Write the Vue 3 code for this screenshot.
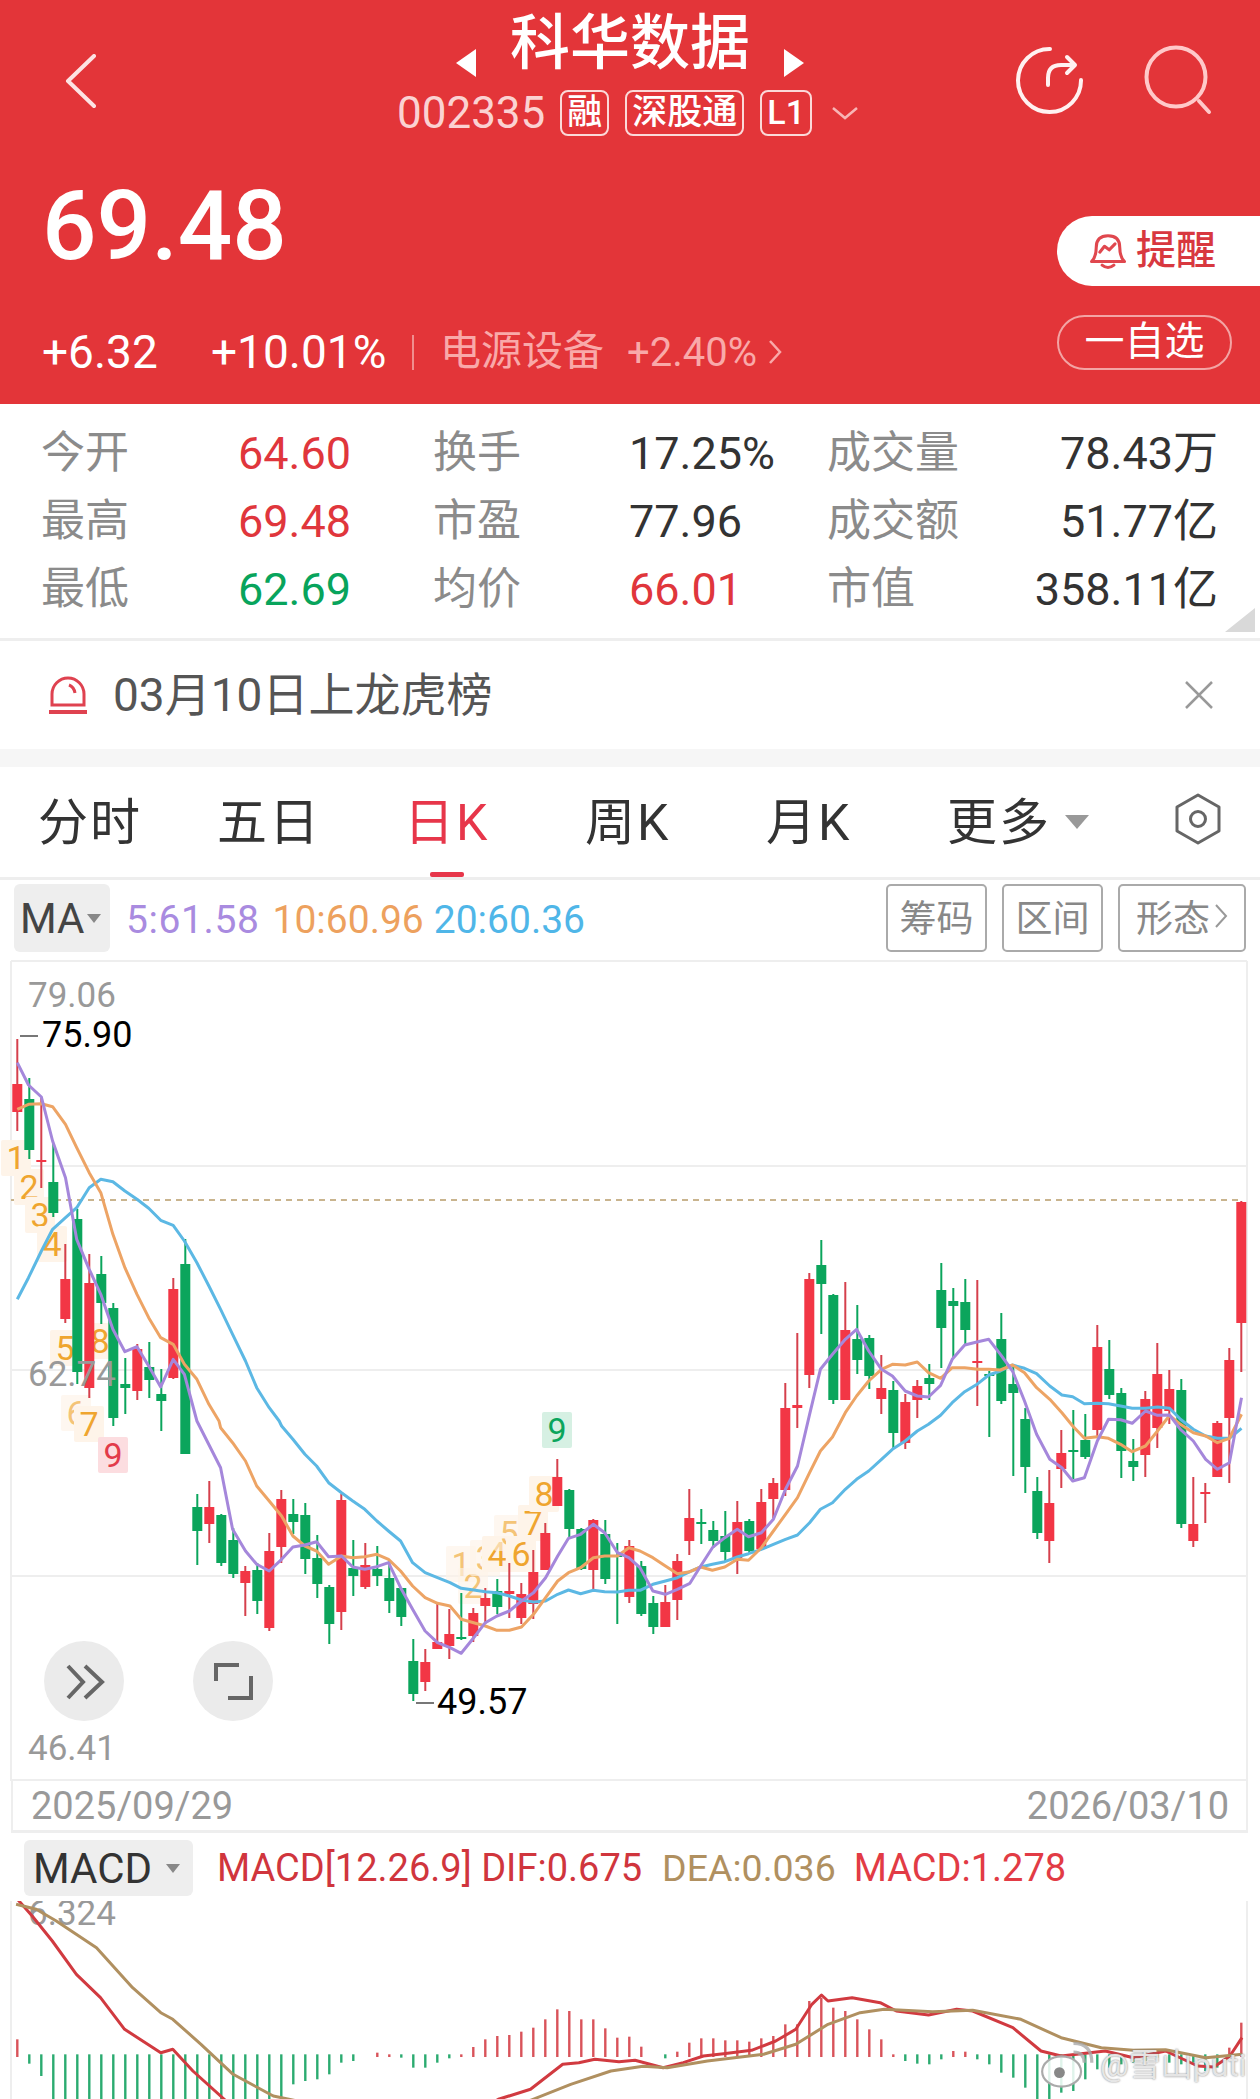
<script setup>
const z3 = (x, y) => [x / 2.489, 960 + y / 3]
const z5 = (x, y) => [x / 2.489, 1400 + y / 3]
const z4 = (x, y) => [630 + x / 2.489, 1150 + y / 3]
const z6 = (x, y) => [x / 1.244, 1780 + y / 3]
const seg = (fn, a) => {
  const out = []
  for (let i = 0; i < a.length; i += 2) out.push(fn(a[i], a[i + 1]).map((v) => v.toFixed(1)).join(','))
  return out
}
const line = (...parts) => parts.flat().join(' ')

const ma5 = line(
  seg(z3, [43,305,71,372,103,408,131,540,163,650,191,835,222,925,251,1000,281,1105,311,1172,341,1157,370,1215,400,1278,431,1195,459,1240,490,1380]),
  seg(z5, [549,200,579,385,611,450,639,490,670,510,701,475,729,438,759,432,788,422,818,467,850,465,878,498,908,505,938,497,967,485,997,560,1027,625,1058,690,1089,725,1120,740,1148,757,1179,710,1208,665,1237,645,1268,630,1298,600,1328,575,1358,530,1388,465,1415,412,1445,400,1477,370,1505,395,1537,455,1565,470]),
  seg(z4, [25,1250,57,1320,88,1330,118,1315,149,1297,176,1245,205,1190,236,1160,267,1135,295,1157,327,1145,357,1105,387,1015,417,945,447,790,474,655,504,610,536,565,564,535,594,600,626,655,653,675,685,720,715,735,743,738,773,703,802,625,833,582,866,572,893,565,922,610,952,660,982,750,1012,850,1045,925,1075,950,1102,990,1131,980,1163,870,1191,805,1221,806,1250,817,1283,780,1313,793,1343,792,1370,835,1402,870,1433,925,1462,955,1492,935,1522,740])
)
const ma10 = line(
  seg(z3, [43,445,71,430,103,428,131,437,163,490,191,560,222,635,251,695,281,820,311,920,341,1000,370,1070,400,1130,431,1150,459,1210,490,1255,520,1330,545,1380]),
  seg(z5, [549,80,579,125,611,180,639,255,670,300,701,345,729,405,759,435,788,450,818,490,850,465,878,470,908,467,938,460,967,475,997,510,1027,555,1058,590,1089,607,1120,615,1148,655,1179,665,1208,675,1237,688,1268,688,1298,678,1328,640,1358,590,1388,540,1415,515,1445,500,1477,470,1505,465,1537,465,1565,440]),
  seg(z4, [25,1200,57,1220,88,1245,118,1268,149,1262,176,1248,205,1258,236,1248,267,1225,295,1228,327,1190,357,1140,387,1090,417,1040,447,965,474,900,504,858,536,785,564,735,594,690,626,655,653,640,685,642,715,633,743,665,773,682,802,650,833,650,866,655,893,655,922,657,952,642,982,665,1012,710,1045,745,1075,785,1102,825,1131,862,1163,857,1191,862,1221,880,1250,902,1283,885,1313,840,1343,793,1370,820,1402,845,1433,855,1462,875,1492,862,1522,790])
)
const ma20 = line(
  seg(z3, [43,1015,71,950,103,870,131,805,163,770,191,740,222,680,251,655,281,662,311,690,341,715,370,742,400,778,431,793,459,840,490,905,520,975,549,1045,579,1120,611,1200,639,1280,670,1340,695,1380]),
  seg(z5, [701,75,729,115,759,160,788,195,818,245,850,275,878,300,908,325,938,360,967,390,997,420,1027,485,1058,515,1089,530,1120,545,1148,562,1179,567,1208,572,1237,575,1268,585,1298,597,1328,603,1358,600,1388,580,1415,567,1445,578,1477,568,1505,572,1537,573,1565,568]),
  seg(z4, [25,1318,57,1300,88,1290,118,1280,149,1262,176,1248,205,1240,236,1232,267,1218,295,1208,327,1195,357,1180,387,1165,417,1152,447,1115,474,1075,504,1055,536,1015,564,985,594,960,626,925,653,895,685,870,715,840,743,820,773,793,802,755,833,722,866,698,893,672,922,660,952,642,982,652,1012,668,1045,705,1075,732,1102,737,1131,758,1163,757,1191,758,1221,765,1250,772,1283,772,1313,768,1343,772,1370,805,1402,835,1433,855,1462,862,1492,862,1522,832])
)

// high, body top, body bottom, low, colour (r / g)
const raw = [
  [1038,1083,1111,1130,'r'],[1077,1098,1149,1158,'g'],[1097,1159,1161,1187,'r'],[1143,1181,1212,1216,'g'],[1243,1278,1318,1322,'r'],
  [1208,1218,1371,1383,'g'],[1253,1282,1387,1397,'r'],[1255,1273,1302,1323,'g'],[1302,1307,1417,1425,'g'],[1357,1383,1387,1413,'g'],
  [1343,1348,1390,1399,'r'],[1341,1366,1379,1397,'g'],[1368,1393,1400,1430,'g'],[1277,1288,1377,1378,'r'],[1238,1263,1453,1453,'g'],
  [1493,1506,1530,1564,'g'],[1480,1506,1523,1542,'r'],[1513,1514,1562,1565,'g'],[1527,1539,1573,1577,'g'],[1565,1570,1582,1615,'r'],
  [1562,1569,1600,1613,'g'],[1532,1550,1627,1630,'r'],[1489,1498,1546,1562,'r'],[1498,1513,1521,1533,'g'],[1502,1514,1558,1573,'g'],
  [1534,1557,1583,1597,'g'],[1584,1586,1623,1643,'g'],[1493,1499,1611,1629,'r'],[1539,1567,1575,1595,'g'],[1542,1564,1586,1588,'r'],
  [1545,1568,1575,1585,'g'],[1560,1577,1600,1612,'g'],[1587,1587,1616,1625,'g'],[1638,1660,1693,1700,'g'],[1648,1661,1681,1690,'r'],
  [1602,1641,1648,1648,'r'],[1608,1633,1645,1658,'r'],[1592,1636,1638,1639,'g'],[1607,1612,1635,1641,'r'],[1587,1597,1605,1623,'r'],
  [1578,1590,1606,1613,'g'],[1562,1590,1593,1617,'r'],[1582,1593,1617,1623,'r'],[1549,1571,1603,1618,'r'],[1522,1532,1569,1569,'r'],
  [1458,1476,1505,1505,'r'],[1488,1489,1528,1538,'g'],[1527,1528,1568,1569,'g'],[1518,1519,1569,1588,'r'],[1519,1533,1578,1583,'g'],
  [1542,1554,1556,1623,'g'],[1539,1545,1596,1602,'r'],[1560,1565,1613,1615,'g'],[1595,1602,1626,1633,'g'],[1584,1601,1626,1626,'r'],
  [1553,1560,1599,1619,'r'],[1488,1517,1540,1554,'r'],[1508,1521,1523,1543,'g'],[1520,1529,1540,1547,'g'],[1510,1535,1551,1560,'g'],
  [1500,1521,1557,1573,'r'],[1518,1520,1550,1552,'g'],[1488,1501,1548,1549,'r'],[1477,1482,1498,1517,'r'],[1382,1407,1489,1495,'r'],
  [1332,1404,1407,1427,'r'],[1272,1278,1374,1387,'r'],[1239,1264,1283,1333,'g'],[1293,1294,1399,1403,'g'],[1281,1329,1399,1399,'r'],
  [1304,1338,1359,1373,'g'],[1334,1337,1375,1388,'g'],[1354,1387,1398,1413,'r'],[1380,1389,1432,1447,'g'],[1393,1401,1442,1448,'r'],
  [1379,1385,1399,1417,'r'],[1363,1377,1383,1399,'g'],[1262,1289,1327,1367,'g'],[1287,1300,1305,1357,'g'],[1278,1301,1329,1343,'g'],
  [1279,1360,1362,1405,'r'],[1370,1373,1375,1436,'g'],[1312,1338,1400,1403,'g'],[1363,1383,1392,1475,'g'],[1407,1418,1466,1492,'g'],
  [1476,1490,1532,1538,'g'],[1469,1502,1540,1562,'r'],[1429,1452,1468,1487,'r'],[1409,1449,1451,1478,'g'],[1413,1439,1456,1458,'g'],
  [1324,1346,1429,1435,'r'],[1339,1368,1394,1398,'g'],[1387,1392,1450,1477,'g'],[1438,1460,1466,1480,'g'],[1390,1398,1454,1476,'r'],
  [1342,1373,1427,1447,'r'],[1369,1388,1410,1423,'r'],[1378,1389,1523,1527,'g'],[1476,1523,1540,1546,'r'],[1482,1491,1493,1522,'r'],
  [1420,1422,1476,1476,'r'],[1347,1359,1417,1482,'r'],[1200,1201,1322,1371,'r']
]
const candles = raw.map(([hi, top, bot, lo, c], i) => ({ x: 17.3 + 12 * i, hi, top, bot, lo, c }))

const tags = [
  { d: '1', x: 16, y: 1157, k: 'o' }, { d: '2', x: 29, y: 1186, k: 'o' }, { d: '3', x: 40, y: 1214, k: 'o' },
  { d: '4', x: 52, y: 1243, k: 'o' }, { d: '5', x: 65, y: 1347, k: 'o' }, { d: '8', x: 100, y: 1340, k: 'o' },
  { d: '6', x: 76, y: 1412, k: 'f' }, { d: '7', x: 89, y: 1423, k: 'o' }, { d: '9', x: 113, y: 1454, k: 'r' },
  { d: '1', x: 461, y: 1563, k: 'f' }, { d: '2', x: 473, y: 1585, k: 'f' }, { d: '3', x: 485, y: 1557, k: 'f' },
  { d: '4', x: 497, y: 1553, k: 'o' }, { d: '5', x: 509, y: 1532, k: 'f' }, { d: '6', x: 521, y: 1553, k: 'o' },
  { d: '7', x: 533, y: 1522, k: 'o' }, { d: '8', x: 544, y: 1493, k: 'o' }, { d: '9', x: 557, y: 1429, k: 'g' }
]

const macdEnds = [
  775,848,885,960,960,960,960,960,960,960,960,960,960,960,960,960,960,960,960,960,960,960,960,910,900,895,880,845,840,null,
  815,820,830,860,860,845,832,820,798,775,765,762,752,740,715,685,690,715,715,742,770,767,797,null,832,812,785,772,772,778,
  778,782,772,765,730,730,660,650,680,690,715,745,775,820,840,848,850,835,810,812,835,850,875,890,920,960,960,935,930,895,
  865,860,850,845,840,830,845,850,845,870,860,800,725
]
const bars = macdEnds.map((e, i) => e === null ? null : {
  x: 17.3 + 12 * i,
  y1: e < 824 ? 1780 + 828 / 3 : 1780 + 820 / 3,
  y2: 1780 + e / 3,
  c: e < 824 ? 'r' : 'g'
}).filter(Boolean)

const dif = line(seg(z6, [20,350,40,405,65,480,95,580,125,650,155,745,200,815,215,805,240,870,280,957,320,1040]), seg(z6, [580,1010,620,955,660,925,700,850,720,845,740,835,770,842,790,838,825,860,850,845,875,825,900,818,935,808,965,780,990,745,1010,670,1022,642,1030,660,1060,650,1095,665,1115,690,1155,702,1190,685,1210,690,1260,740,1295,810,1320,825,1375,810,1410,830,1450,810,1490,855,1510,858,1530,825,1545,770]))
const dea = line(seg(z6, [20,370,45,385,70,420,120,500,165,620,200,695,215,715,250,790,290,880,340,945,370,960,420,985]), seg(z6, [610,990,660,958,710,910,760,870,800,856,830,860,880,840,950,820,990,790,1030,730,1070,695,1100,685,1160,692,1210,688,1270,715,1320,770,1370,800,1410,808,1450,806,1500,830,1545,820]))

const stats = [
  { a: '今开', b: '64.60', bc: 'red', c: '换手', d: '17.25%', dc: 'dark', e: '成交量', f: '78.43万' },
  { a: '最高', b: '69.48', bc: 'red', c: '市盈', d: '77.96', dc: 'dark', e: '成交额', f: '51.77亿' },
  { a: '最低', b: '62.69', bc: 'green', c: '均价', d: '66.01', dc: 'red', e: '市值', f: '358.11亿' }
]
const tabs = ['分时', '五日', '日K', '周K', '月K']
</script>

<template>
  <div class="page">
    <header class="header">
      <div class="topbar">
        <svg class="back" width="32" height="56" viewBox="0 0 32 56"><polyline points="29,2 3,27 29,52" /></svg>
        <div class="center">
          <div class="title-row">
            <span class="tri tri-l"></span>
            <span class="title">科华数据</span>
            <span class="tri tri-r"></span>
          </div>
          <div class="sub-row">
            <span class="code">002335</span>
            <span class="tag">融</span>
            <span class="tag">深股通</span>
            <span class="tag tag-l">L1</span>
            <svg class="down" width="28" height="14" viewBox="0 0 28 14"><polyline points="2,2 14,12 26,2" /></svg>
          </div>
        </div>
        <div class="icons">
          <svg class="ic" width="70" height="70" viewBox="0 0 70 70">
            <path class="ic-w" d="M35 4 A31.5 31.5 0 1 0 66 35" />
            <path class="ic-w" d="M33 40 V33 Q33 20 46 20 H59 M52 12 L60 20 L52 28" />
          </svg>
          <svg class="ic" width="70" height="72" viewBox="0 0 70 72">
            <circle class="ic-p" cx="32" cy="32" r="29.5" />
            <path class="ic-p" d="M55 56 L65 67" />
          </svg>
        </div>
      </div>
      <div class="quote">
        <div class="quote-left">
          <div class="price">69.48</div>
          <div class="delta-row">
            <span class="delta">+6.32</span>
            <span class="delta delta-pct">+10.01%</span>
            <span class="divider"></span>
            <span class="sector">电源设备</span>
            <span class="sector-pct">+2.40%</span>
            <svg width="14" height="28" viewBox="0 0 14 28" class="sector-arrow"><polyline points="2,3 12,14 2,25" /></svg>
          </div>
        </div>
        <div class="quote-right">
          <div class="remind">
            <svg width="40" height="40" viewBox="0 0 34 34" class="bell">
              <path d="M3 26 Q7 22 7 14 Q7 4 17 4 Q27 4 27 14 Q27 22 31 26 Z" />
              <path d="M12 29 Q17 33 22 29" />
              <path d="M10 18 L14 13 L18 16 L23 11" />
            </svg>
            <span class="remind-text">提醒</span>
          </div>
          <div class="watch">一自选</div>
        </div>
      </div>
    </header>

    <section class="stats">
      <template v-for="r in stats" :key="r.a">
        <span class="lbl">{{ r.a }}</span>
        <span class="val" :class="r.bc">{{ r.b }}</span>
        <span class="lbl">{{ r.c }}</span>
        <span class="val" :class="r.dc">{{ r.d }}</span>
        <span class="lbl">{{ r.e }}</span>
        <span class="val dark end">{{ r.f }}</span>
      </template>
      <span class="corner"></span>
    </section>

    <section class="notice">
      <svg width="42" height="40" viewBox="0 0 42 40" class="notice-ic">
        <path d="M5 30 V19 A16 16 0 0 1 37 19 V30 Z" />
        <path d="M22 10 Q27 12 28 18" />
        <path class="base" d="M2 37 H40" />
      </svg>
      <span class="notice-text">03月10日上龙虎榜</span>
      <svg width="30" height="30" viewBox="0 0 30 30" class="close"><path d="M2 2 L28 28 M28 2 L2 28" /></svg>
    </section>

    <div class="band"></div>

    <nav class="tabs">
      <span v-for="t in tabs" :key="t" class="tab" :class="{ on: t === '日K' }">{{ t }}</span>
      <span class="tab more">更多<i class="more-tri"></i></span>
      <svg width="48" height="54" viewBox="0 0 48 54" class="hex">
        <path d="M24 3 L45 15 V39 L24 51 L3 39 V15 Z" />
        <circle cx="24" cy="27" r="7.5" />
      </svg>
    </nav>

    <div class="ma-row">
      <div class="ma-box">MA<i class="small-tri"></i></div>
      <div class="ma-vals">
        <span class="m5">5:61.58</span>
        <span class="m10">10:60.96</span>
        <span class="m20">20:60.36</span>
      </div>
      <div class="ma-btns">
        <span class="mbtn">筹码</span>
        <span class="mbtn">区间</span>
        <span class="mbtn wide">形态<svg width="14" height="26" viewBox="0 0 14 26"><polyline points="2,2 12,13 2,24" /></svg></span>
      </div>
    </div>

    <svg class="kline" width="1260" height="822" viewBox="0 958 1260 822">
      <line v-for="y in [960, 1165, 1369, 1575, 1779]" :key="y" class="grid" x1="11" x2="1247" :y1="y" :y2="y" />
      <line class="grid" x1="11" x2="11" y1="960" y2="1780" />
      <line class="grid" x1="1247" x2="1247" y1="960" y2="1780" />
      <line class="dash" x1="11" x2="1240" y1="1199" y2="1199" />

      <g v-for="(t, i) in tags" :key="i" :class="'td-' + t.k">
        <rect :x="t.x - 15" :y="t.y - 18" width="30" height="36" rx="2" />
        <text :x="t.x" :y="t.y + 12">{{ t.d }}</text>
      </g>

      <g v-for="(c, i) in candles" :key="i" :class="c.c === 'r' ? 'up' : 'dn'">
        <line class="wick" :x1="c.x" :x2="c.x" :y1="c.hi" :y2="c.lo" />
        <rect class="body" :x="c.x - 5" :y="c.top" width="10" :height="Math.max(c.bot - c.top, 2)" />
      </g>

      <polyline class="ln l20" :points="ma20" />
      <polyline class="ln l10" :points="ma10" />
      <polyline class="ln l5" :points="ma5" />

      <text class="axis" x="28" y="1006">79.06</text>
      <text class="axis" x="28" y="1385">62.74</text>
      <text class="axis" x="28" y="1759">46.41</text>
      <line class="mark" x1="20" x2="38" y1="1035" y2="1035" />
      <text class="peak" x="42" y="1046">75.90</text>
      <line class="mark" x1="416" x2="434" y1="1702" y2="1702" />
      <text class="peak" x="437" y="1713">49.57</text>

      <circle class="round" cx="84" cy="1680" r="40" />
      <circle class="round" cx="233" cy="1680" r="40" />
      <path class="round-ic" d="M68 1665 L83 1681 L68 1697 M85 1665 L102 1681 L85 1697" />
      <path class="round-ic" d="M216 1680 V1664 H239 M251 1675 V1697 H228" />
    </svg>

    <div class="dates">
      <span>2025/09/29</span>
      <span>2026/03/10</span>
    </div>

    <div class="macd-head">
      <div class="macd-box">MACD<i class="small-tri"></i></div>
      <span class="mh-a">MACD[12.26.9] DIF:0.675</span>
      <span class="mh-b">DEA:0.036</span>
      <span class="mh-c">MACD:1.278</span>
    </div>

    <div class="macd-wrap">
      <svg class="macd" width="1260" height="199" viewBox="0 1900 1260 199">
        <line class="grid" x1="11" x2="11" y1="1900" y2="2099" />
        <line class="grid" x1="1247" x2="1247" y1="1900" y2="2099" />
        <text class="axis" x="28" y="1924">6.324</text>
        <line v-for="(b, i) in bars" :key="i" :class="b.c === 'r' ? 'bar-r' : 'bar-g'" :x1="b.x" :x2="b.x" :y1="b.y1" :y2="b.y2" />
        <polyline class="ln dif" :points="dif" />
        <polyline class="ln dea" :points="dea" />
      </svg>
      <div class="wm">
        <svg width="54" height="50" viewBox="0 0 50 46">
          <ellipse class="wm-s" cx="20" cy="29" rx="18" ry="14" />
          <circle class="wm-e" cx="18" cy="30" r="5" />
          <path class="wm-a" d="M31 11 Q41 11 41 21 M31 3 Q48 3 48 21" />
        </svg>
        <span class="wm-text">@雪山puti</span>
      </div>
    </div>
  </div>
</template>

<style>
html, body { margin: 0; background: #fff; }
</style>

<style scoped>
.page {
  width: 1260px;
  height: 2099px;
  overflow: hidden;
  background: #fff;
  font-family: Roboto, "Noto Sans CJK SC", sans-serif;
}
i { display: block; font-style: normal; }

.header {
  height: 404px;
  background: #e33539;
  color: #fff;
  box-sizing: border-box;
}
.topbar {
  height: 148px;
  display: grid;
  grid-template-columns: 1fr auto 1fr;
}
.back { margin: 54px 0 0 65px; }
.back polyline { fill: none; stroke: #fde3e3; stroke-width: 4; stroke-linecap: round; stroke-linejoin: round; }
.center { padding-top: 6px; display: flex; flex-direction: column; align-items: center; }
.title-row { height: 84px; display: flex; align-items: flex-start; gap: 34px; }
.title { font-size: 60px; line-height: 76px; font-weight: 500; }
.tri { width: 0; height: 0; margin-top: 43px; border-top: 14px solid transparent; border-bottom: 14px solid transparent; }
.tri-l { border-right: 20px solid #fff; }
.tri-r { border-left: 20px solid #fff; }
.sub-row { display: flex; align-items: center; height: 46px; gap: 16px; padding-right: 4px; }
.code { font-size: 44px; line-height: 46px; color: #fbd2d2; margin-right: -1px; }
.tag {
  height: 46px;
  box-sizing: border-box;
  border: 2px solid #fbd9d9;
  border-radius: 8px;
  padding: 0 5px;
  font-size: 35px;
  line-height: 41px;
  font-weight: 500;
  color: #fff;
}
.tag-l { padding: 0 5px; font-size: 34px; }
.down { margin-left: 3px; }
.down polyline { fill: none; stroke: #f8b5b5; stroke-width: 2.5; }
.icons { display: flex; justify-content: flex-end; gap: 59px; padding: 45px 46px 0 0; align-items: flex-start; }
.ic-w, .ic-p { fill: none; stroke-width: 4; stroke-linecap: round; stroke-linejoin: round; }
.ic-w { stroke: #fff1f1; }
.ic-p { stroke: #ffc9c9; }

.quote { display: flex; justify-content: space-between; height: 256px; }
.quote-left { padding: 28px 0 0 42px; }
.price { font-size: 96px; line-height: 100px; font-weight: 500; }
.delta-row { margin-top: 51px; display: flex; align-items: center; height: 50px; }
.delta { font-size: 46px; width: 169px; }
.delta-pct { width: 201px; }
.divider { width: 2px; height: 35px; background: #f08f8f; margin-right: 26px; }
.sector { font-size: 41px; line-height: 46px; padding-bottom: 2px; color: #f9a9a9; width: 187px; }
.sector-pct { font-size: 40px; color: #f9a9a9; width: 141px; }
.sector-arrow polyline { fill: none; stroke: #f9a9a9; stroke-width: 2.5; }
.quote-right { width: 203px; padding-top: 68px; }
.remind {
  height: 70px;
  background: #fff;
  border-radius: 35px 0 0 35px;
  display: flex;
  align-items: center;
  padding-left: 31px;
  gap: 8px;
  font-size: 40px;
  font-weight: 500;
  color: #d8383f;
}
.remind-text { line-height: 46px; }
.bell { flex: none; }
.bell path { fill: none; stroke: #e0474e; stroke-width: 2.6; stroke-linejoin: round; stroke-linecap: round; }
.watch {
  margin-top: 29px;
  width: 175px;
  height: 55px;
  box-sizing: border-box;
  border: 2px solid #f3a4a4;
  border-radius: 28px;
  font-size: 40px;
  line-height: 49px;
  text-align: center;
  color: #fff;
}

.stats {
  position: relative;
  height: 237px;
  box-sizing: border-box;
  padding: 15px 0 0 41px;
  border-bottom: 3px solid #eee;
  display: grid;
  grid-template-columns: 197px 195px 196px 198px 200px 191px;
  grid-auto-rows: 68px;
  align-items: center;
}
.lbl { font-size: 44px; line-height: 50px; color: #8b8b8b; }
.val { font-size: 45px; line-height: 56px; padding-top: 2px; }
.red { color: #e0363c; }
.green { color: #08a45c; }
.dark { color: #333; }
.end { text-align: right; }
.corner {
  position: absolute;
  right: 5px;
  bottom: 6px;
  width: 30px;
  height: 24px;
  background: #d9d9d9;
  clip-path: polygon(100% 0, 100% 100%, 0 100%);
}

.notice { height: 108px; display: flex; align-items: center; padding: 0 46px 0 47px; }
.notice-ic path { fill: none; stroke: #df4250; stroke-width: 3; }
.notice-ic .base { stroke-width: 4; }
.notice-text { margin-left: 24px; font-size: 46px; line-height: 54px; color: #555; flex: 1; }
.close path { fill: none; stroke: #999; stroke-width: 2.5; }
.band { height: 18px; background: #f6f6f6; }

.tabs {
  position: relative;
  height: 113px;
  box-sizing: border-box;
  padding-left: 38px;
  border-bottom: 3px solid #eee;
  display: grid;
  grid-template-columns: 179px 187px 181px 181px 181px 227px 46px;
  align-items: center;
  font-size: 50px;
  letter-spacing: 2px;
  color: #333;
}
.tab { position: relative; height: 100%; display: flex; align-items: center; padding-bottom: 8px; box-sizing: border-box; }
.tab.on { color: #e7364a; }
.tab.on::after {
  content: "";
  position: absolute;
  left: 26px;
  bottom: 0;
  width: 34px;
  height: 5px;
  border-radius: 2px;
  background: #e7364a;
}
.more-tri { margin: 8px 0 0 14px; width: 0; height: 0; border-left: 12px solid transparent; border-right: 12px solid transparent; border-top: 14px solid #999; }
.hex path, .hex circle { fill: none; stroke: #666; stroke-width: 3; stroke-linejoin: round; }
.hex { margin-bottom: 6px; }

.ma-row { height: 79px; display: flex; align-items: flex-start; padding: 4px 14px 0 14px; box-sizing: border-box; }
.ma-box {
  width: 96px;
  height: 68px;
  background: #eee;
  border-radius: 6px;
  display: flex;
  align-items: center;
  font-size: 42px;
  color: #444;
  padding-left: 6px;
  box-sizing: border-box;
}
.small-tri { margin-left: 3px; width: 0; height: 0; border-left: 7px solid transparent; border-right: 7px solid transparent; border-top: 9px solid #888; }
.ma-vals { display: flex; gap: 13px; margin-left: 16px; font-size: 39px; line-height: 72px; }
.m5 { color: #a98be0; letter-spacing: 0.6px; }
.m10 { color: #eda15e; margin-right: -3px; }
.m20 { color: #4fb6e8; }
.ma-btns { margin-left: auto; display: flex; gap: 15px; }
.mbtn {
  width: 101px;
  height: 68px;
  box-sizing: border-box;
  border: 2px solid #aaa;
  border-radius: 5px;
  padding-bottom: 4px;
  font-size: 37px;
  color: #888;
  display: flex;
  align-items: center;
  justify-content: center;
  gap: 4px;
}
.mbtn.wide { width: 128px; }
.mbtn svg polyline { fill: none; stroke: #999; stroke-width: 2; }

.kline, .macd { display: block; }
.grid { stroke: #eee; stroke-width: 2; }
.dash { stroke: #c9b48e; stroke-width: 2; stroke-dasharray: 6 5; }
.td-o rect, .td-f rect { fill: #fef4e9; }
.td-o text, .td-f text { fill: #efa52f; }
.td-f { opacity: 0.65; }
.td-r rect { fill: #fcdde0; }
.td-r text { fill: #e23b4a; }
.td-g rect { fill: #d6f0e3; }
.td-g text { fill: #0ba55c; }
.td-o text, .td-f text, .td-r text, .td-g text { font-size: 34px; text-anchor: middle; }
.wick { stroke-width: 2; }
.up .wick { stroke: #d5404c; }
.up .body { fill: #f23645; }
.dn .wick { stroke: #0ba55c; }
.dn .body { fill: #0ba55c; }
.ln { fill: none; stroke-width: 3; stroke-linejoin: round; }
.l5 { stroke: #a587db; }
.l10 { stroke: #eda465; }
.l20 { stroke: #5cb8e4; }
.axis { font-size: 35px; fill: #999; }
.peak { font-size: 36px; fill: #000; }
.mark { stroke: #777; stroke-width: 2; }
.round { fill: #ebebeb; }
.round-ic { fill: none; stroke: #666; stroke-width: 4; }

.dates {
  height: 52px;
  box-sizing: border-box;
  margin: 0 12px 0 11px;
  padding: 0 17px 0 18px;
  border: 2px solid #eee;
  border-width: 0 2px 3px;
  display: flex;
  justify-content: space-between;
  align-items: center;
  font-size: 38px;
  color: #999;
}
.macd-head { height: 68px; display: flex; align-items: center; padding: 2px 0 0 24px; font-size: 38px; box-sizing: border-box; }
.macd-box {
  width: 169px;
  height: 56px;
  background: #eee;
  border-radius: 6px;
  display: flex;
  align-items: center;
  padding-left: 9px;
  box-sizing: border-box;
  font-size: 42px;
  color: #333;
  margin-right: 24px;
}
.macd-box .small-tri { margin-left: 14px; }
.mh-a { color: #d0353d; margin-right: 20px; }
.mh-b { color: #b09060; margin-right: 18px; font-size: 37.5px; }
.mh-c { color: #e23b45; }
.macd-wrap { position: relative; height: 199px; }
.bar-r { stroke: #d9535a; stroke-width: 2.4; }
.bar-g { stroke: #2bab70; stroke-width: 2.4; }
.dif { stroke: #d13a40; }
.dea { stroke: #b09060; }
.wm {
  position: absolute;
  left: 1040px;
  top: 139px;
  display: flex;
  align-items: center;
  gap: 6px;
}
.wm-text {
  font-size: 32px;
  line-height: 40px;
  color: rgba(238, 238, 238, 0.92);
  text-shadow: 0 0 2px #777;
}
.wm-s { fill: rgba(255, 255, 255, 0.85); stroke: #aaa; stroke-width: 2; }
.wm-e { fill: #888; }
.wm-a { fill: none; stroke: rgba(170, 170, 170, 0.8); stroke-width: 3; }
</style>
